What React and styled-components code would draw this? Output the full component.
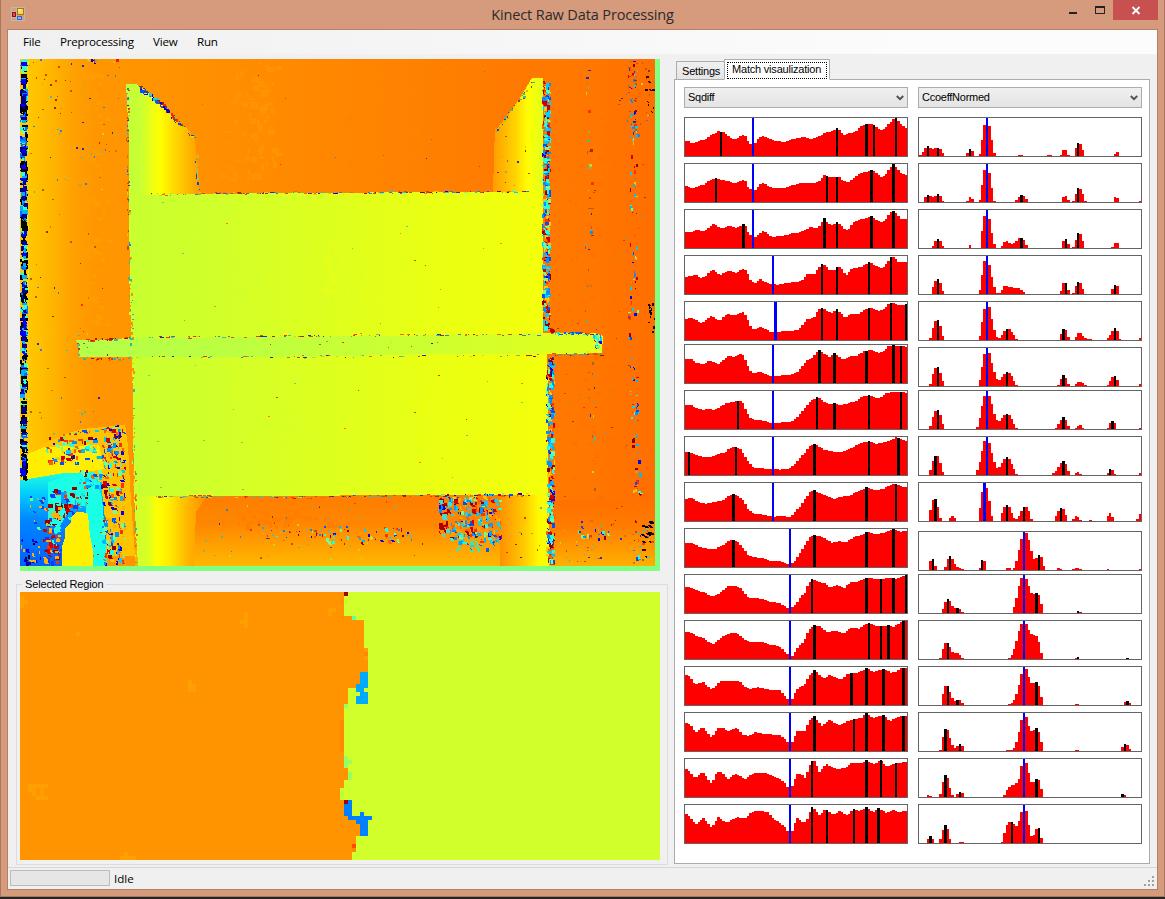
import React from "react";
import styled, { createGlobalStyle } from "styled-components";

const Global = createGlobalStyle`
  * { box-sizing: border-box; }
  html, body { margin: 0; padding: 0; background: #242326; overflow: hidden; }
`;

const UI = `"Open Sans", "Noto Sans", sans-serif`;
const CLASSIC = `"Liberation Sans", Arial, sans-serif`;

const Desktop = styled.div`
  width: 1165px;
  height: 899px;
  background: #242326;
`;
const Window = styled.div`
  width: 1165px;
  height: 897px;
  display: flex;
  flex-direction: column;
  background: #d69a7d;
  border: 1px solid #a8775f;
  border-top: 0;
  padding: 0 6px 6px;
`;
const TitleBar = styled.header`
  height: 29px;
  flex: none;
  display: grid;
  grid-template-columns: 180px 1fr 180px;
  align-items: start;
`;
const AppIcon = styled.svg`
  display: block;
  margin: 7px 0 0 4px;
`;
const Title = styled.h1`
  margin: 0;
  padding-top: 4px;
  text-align: center;
  font: 400 14.5px/21px ${UI};
  letter-spacing: -0.12px;
  color: #2b2b2b;
  white-space: nowrap;
`;
const Controls = styled.div`
  display: flex;
  justify-content: flex-end;
  height: 20px;
`;
const ControlButton = styled.button`
  width: ${(p) => p.$w}px;
  height: 20px;
  padding: 0;
  border: 0;
  background: ${(p) => (p.$danger ? "#c75050" : "transparent")};
  svg { display: block; }
`;
const Client = styled.div`
  flex: 1;
  min-height: 0;
  display: flex;
  flex-direction: column;
  border: 1px solid #b57f68;
  background: #f0f0f0;
`;
const MenuBar = styled.nav`
  height: 24px;
  flex: none;
  display: flex;
  gap: 20px;
  padding-left: 15px;
  background: linear-gradient(90deg, #f0f0f0, #fcfcfc 80%);
  font: 400 11.6px/24px ${UI};
  letter-spacing: -0.2px;
  color: #000;
`;
const MenuItem = styled.span`
  width: ${(p) => p.$w}px;
  white-space: nowrap;
`;
const Body = styled.main`
  flex: 1;
  min-height: 0;
  display: flex;
`;
const LeftPane = styled.section`
  width: 660px;
  flex: none;
  padding: 5px 0 0 8px;
`;
const DepthView = styled.svg`
  display: block;
  margin-left: 4px;
`;
const GroupBox = styled.fieldset`
  margin: 6px 0 0;
  width: 652px;
  height: 288px;
  padding: 0 3px;
  border: 1px solid #dcdcdc;
  min-width: 0;
`;
const Legend = styled.legend`
  margin-left: 2px;
  padding: 0 3px;
  height: 14px;
  font: 400 11px/14px ${CLASSIC};
  letter-spacing: -0.15px;
  color: #000;
`;
const RegionView = styled.svg`
  display: block;
  margin-top: 1px;
`;
const RightPane = styled.section`
  flex: none;
  width: 476px;
  margin-left: 6px;
  padding-top: 5px;
`;
const Tabs = styled.div`
  height: 21px;
  display: flex;
  align-items: flex-end;
  padding-left: 2px;
  position: relative;
  z-index: 1;
`;
const Tab = styled.div`
  width: ${(p) => (p.$active ? 106 : 49)}px;
  height: ${(p) => (p.$active ? 21 : 19)}px;
  margin-left: ${(p) => (p.$active ? -1 : 0)}px;
  padding: ${(p) => (p.$active ? "2px 2px" : "2px 5px")};
  border: 1px solid #acacac;
  border-bottom-color: ${(p) => (p.$active ? "#fff" : "#acacac")};
  background: ${(p) => (p.$active ? "#fff" : "linear-gradient(#f0f0f0, #e5e5e5)")};
  font: 400 11px/15px ${CLASSIC};
  letter-spacing: -0.2px;
  white-space: nowrap;
  color: #000;
`;
const Focus = styled.span`
  display: block;
  height: 17px;
  padding-left: 4px;
  border: 1px dotted #000;
  line-height: 12px;
`;
const TabPage = styled.div`
  height: 785px;
  margin-top: -1px;
  border: 1px solid #acacac;
  background: #fff;
  display: flex;
  gap: 10px;
  padding: 7px 0 0 9px;
`;
const Column = styled.div`
  width: 224px;
`;
const Select = styled.div`
  height: 21px;
  display: flex;
  align-items: center;
  justify-content: space-between;
  padding: 0 3px;
  margin-bottom: 9px;
  border: 1px solid #acacac;
  background: linear-gradient(#f0f0f0, #e4e4e4);
  font: 400 11px/19px ${CLASSIC};
  letter-spacing: -0.25px;
  color: #000;
`;
const ChartFrame = styled.div`
  width: 224px;
  height: 40px;
  border: 1px solid #646464;
  background: #fff;
  margin-bottom: ${(p) => p.$gap}px;
  svg { display: block; }
`;
const StatusBar = styled.footer`
  height: 22px;
  flex: none;
  display: flex;
  border-top: 1px solid #d7d7d7;
  padding: 2px 1px 0 2px;
  font: 400 11.6px/17px ${UI};
  color: #000;
`;
const Progress = styled.div`
  width: 100px;
  height: 16px;
  border: 1px solid #bcbcbc;
  background: #e6e6e6;
  margin-right: 4px;
`;
const Grip = styled.svg`
  margin: 6px 0 0 auto;
`;

/* ---------- depth map ---------- */

function makeRandom(seed) {
  let s = seed;
  return () => {
    s = (s + 0x6d2b79f5) | 0;
    let t = Math.imul(s ^ (s >>> 15), 1 | s);
    t = (t + Math.imul(t ^ (t >>> 7), 61 | t)) ^ t;
    return ((t ^ (t >>> 14)) >>> 0) / 4294967296;
  };
}

const JET = ["#0000ff", "#0050ff", "#0090ff", "#00b8ff", "#20ffe0", "#70ff90", "#ffc800", "#ff3000", "#d00000", "#900000", "#00d0ff", "#ff6000"];
const COLD = ["#000000", "#000000", "#000000", "#000000", "#0000ff", "#0070ff", "#00b0ff", "#30ffd0", "#80ff80", "#00008c", "#000000"];
const WARM = ["#ff3000", "#a03000", "#40c0a0", "#3080d0", "#c8d820", "#2030b0", "#90b060", "#b06010", "#e07000"];
const BLACK = ["#000000", "#000000", "#300000"];

function buildNoise() {
  const rnd = makeRandom(71);
  const layers = {};
  const put = (x, y, w, h, color) => {
    layers[color] = (layers[color] || "") + `M${Math.round(x)} ${Math.round(y)}h${w}v${h}h${-w}z`;
  };
  const fill = (x, y, w, h, n, palette, mw = 3, mh = 3) => {
    for (let i = 0; i < n; i++) {
      const c = palette[Math.floor(rnd() * palette.length)];
      const pw = 1 + Math.floor(rnd() * mw);
      const ph = 1 + Math.floor(rnd() * mh);
      const px = x + rnd() * Math.max(0, w - pw);
      const py = y + rnd() * Math.max(0, h - ph);
      put(px, py, pw, ph, c);
      if (mw > 2) {
        const dx = rnd() > 0.5 && px + pw + 1 < x + w ? 1 : 0;
        put(px + dx, py + ph, pw, 1, c);
      }
    }
  };
  const edge = (x1, y1, x2, y2, n, palette, jitter = 1, mw = 3, mh = 2) => {
    for (let i = 0; i < n; i++) {
      const t = rnd();
      const c = palette[Math.floor(rnd() * palette.length)];
      put(x1 + (x2 - x1) * t + (rnd() - 0.5) * jitter, y1 + (y2 - y1) * t + (rnd() - 0.5) * jitter,
        1 + Math.floor(rnd() * mw), 1 + Math.floor(rnd() * mh), c);
    }
  };

  fill(20, 59, 8, 421, 520, COLD, 6, 4);
  fill(27, 59, 2, 400, 45, ["#ffc800", "#c8ff30"], 1, 4);

  fill(29, 59, 95, 100, 55, WARM, 2, 2);
  fill(29, 150, 80, 290, 60, WARM, 2, 2);
  fill(60, 59, 60, 4, 7, ["#ff1000", "#0000b0", "#c8e020"], 3, 3);
  edge(127, 88, 128, 250, 50, WARM, 2, 2, 3);
  edge(129, 250, 133, 430, 55, ["#d0ff30", "#ff9200", "#40b0a0"], 3, 2, 3);
  edge(133, 430, 136, 565, 45, ["#d0ff30", "#ff9200", "#40b0a0", "#ff6000"], 3, 2, 3);
  edge(138, 86, 162, 105, 38, ["#0000ff", "#0060ff", "#a02000", "#20d0d0", "#0050ff"], 4, 4, 3);
  edge(160, 102, 175, 120, 26, ["#ff2000", "#0000d0", "#0060ff", "#a02000"], 3, 3, 3);
  edge(175, 120, 196, 140, 24, ["#80d040", "#0040ff", "#a04000", "#e0e000"], 3, 3, 2);
  edge(196, 155, 199, 192, 18, ["#20b0d0", "#c0c020", "#0050c0"], 3, 2, 3);

  edge(150, 194, 300, 192, 60, WARM, 2, 4, 1);
  edge(300, 193, 528, 191, 90, [...JET, ...WARM], 2, 4, 1);
  edge(494, 132, 532, 82, 36, ["#a04000", "#30c0a0", "#2040c0", "#e0b000"], 3, 3, 2);
  fill(496, 135, 35, 56, 12, WARM, 2, 2);

  fill(542, 79, 9, 252, 330, JET, 4, 4);
  edge(546, 326, 553, 332, 14, ["#ff3000", "#c00000"], 2, 4, 3);
  fill(546, 355, 9, 210, 230, JET, 4, 4);

  edge(78, 340, 132, 337, 24, ["#a02000", "#ff3000", "#30c0a0"], 2, 4, 2);
  edge(132, 337, 545, 334, 80, WARM, 2, 4, 1);
  edge(552, 333, 595, 333, 30, ["#0060ff", "#20e0e0", "#a02000", "#ff4000"], 2, 4, 2);
  edge(78, 358, 132, 358, 20, ["#a02000", "#ff3000", "#40b0a0"], 2, 3, 2);
  edge(132, 357, 545, 355, 50, WARM, 2, 4, 1);
  edge(553, 354, 600, 354, 24, ["#802000", "#ff4000", "#40a0a0"], 2, 4, 1);
  fill(593, 334, 9, 18, 20, JET, 3, 3);
  edge(77, 340, 79, 358, 8, ["#40c0a0", "#a05000"], 2, 2, 2);
  fill(250, 341, 200, 10, 9, WARM, 2, 1);

  edge(155, 496, 340, 497, 70, WARM, 2, 4, 1);
  edge(340, 496, 438, 495, 34, WARM, 2, 4, 1);
  edge(438, 495, 532, 494, 44, JET, 3, 4, 2);
  fill(438, 496, 14, 40, 32, ["#c00000", "#0000ff", "#0090ff", "#ff2000", "#40e0d0", "#a80000"], 5, 4);
  fill(448, 496, 54, 48, 215, [...JET, "#00a0ff", "#20d0e0", "#ffa000", "#ffa800"], 4, 4);
  fill(454, 536, 42, 15, 40, ["#20d0e0", "#0060ff", "#ffa000", "#50e0a0"], 4, 3);

  fill(190, 500, 245, 62, 60, WARM, 2, 2);
  fill(240, 526, 180, 14, 40, JET, 2, 2);
  fill(315, 528, 100, 16, 30, JET, 3, 3);
  fill(505, 500, 42, 64, 10, WARM, 2, 2);

  edge(630, 60, 634, 140, 55, [...JET, ...WARM], 7, 3, 3);
  edge(632, 140, 634, 310, 42, JET, 7, 2, 4);
  edge(631, 310, 639, 565, 66, JET, 7, 3, 4);
  edge(587, 70, 590, 240, 24, WARM, 4, 3, 3);
  edge(586, 240, 594, 490, 26, WARM, 7, 2, 3);
  fill(618, 59, 36, 70, 34, WARM, 2, 2);
  fill(645, 75, 10, 50, 10, BLACK, 3, 1);
  fill(648, 300, 7, 35, 14, BLACK, 2, 3);
  fill(640, 520, 15, 45, 26, [...BLACK, "#60d080", "#ff4000"], 4, 1);
  fill(556, 520, 96, 45, 55, WARM, 2, 2);
  fill(575, 525, 35, 18, 16, JET, 3, 3);
  fill(556, 80, 96, 430, 40, ["#a04000", "#ff3000", "#50a0a0"], 2, 1);
  fill(135, 198, 400, 294, 40, ["#a0c020", "#ff8000", "#60d080", "#a06010"], 2, 1);
  fill(200, 65, 290, 120, 13, WARM, 1, 1);

  fill(46, 436, 56, 28, 72, JET, 5, 3);
  edge(62, 434, 125, 425, 36, JET, 3, 4, 2);
  fill(102, 428, 24, 138, 225, [...JET, "#ffb000", "#ffb000", "#0000ff"], 4, 4);
  fill(48, 487, 30, 34, 52, ["#d00000", "#ff3000", "#0040ff", "#900000", "#20ffe0", "#00a0ff"], 5, 4);
  fill(43, 505, 19, 60, 78, ["#d00000", "#ff3000", "#0040ff", "#900000", "#20ffe0", "#ffb000"], 5, 4);
  fill(78, 470, 28, 18, 32, JET, 4, 3);
  fill(72, 492, 17, 18, 16, ["#900000", "#ff3000", "#20e0d0", "#00a0ff"], 3, 3);
  fill(92, 515, 14, 50, 8, WARM, 2, 3);
  fill(20, 538, 22, 28, 26, ["#000000", "#0000a0", "#0000ff", "#ffb000"], 3, 3);
  fill(28, 495, 18, 35, 14, ["#ffb000", "#60ff90", "#0040ff"], 3, 2);
  fill(20, 450, 8, 28, 8, BLACK, 6, 3);

  return Object.entries(layers);
}

function buildTexture() {
  const rnd = makeRandom(9);
  const patches = (cx, cy, w, h, n) => {
    let d = "";
    for (let i = 0; i < n; i++) {
      const x = Math.round(cx + (rnd() + rnd() - 1) * w);
      const y = Math.round(cy + (rnd() - 0.5) * h);
      const pw = 2 + Math.floor(rnd() * 6);
      d += `M${x} ${y}h${pw}v${2 + Math.floor(rnd() * 5)}h${-pw}z`;
    }
    return d;
  };
  return [
    ["#ff9300", patches(250, 120, 35, 120, 80)],
    ["#ff8300", patches(385, 125, 45, 120, 80)],
    ["#ff9c00", patches(92, 200, 18, 260, 70)],
    ["#d0ff2c", patches(225, 250, 40, 100, 60)],
    ["#e4ff18", patches(350, 285, 45, 90, 60)],
    ["#d8ff24", patches(265, 410, 50, 150, 60)],
    ["#eeff0e", patches(440, 420, 45, 130, 60)],
    ["#ff7200", patches(600, 310, 35, 400, 90)],
    ["#ff7e00", patches(285, 515, 70, 22, 40)],
  ];
}

const NOISE = buildNoise();
const TEXTURE = buildTexture();

const Stops = ({ list }) => list.map(([o, c]) => <stop key={o} offset={o} stopColor={c} />);
const Ramp = ({ id, x1, x2, stops }) => (
  <linearGradient id={id} gradientUnits="userSpaceOnUse" x1={x1} x2={x2} y1="0" y2="0">
    <Stops list={stops} />
  </linearGradient>
);

function DepthMap() {
  return (
    <DepthView width="640" height="512" viewBox="20 59 640 512" shapeRendering="crispEdges">
      <defs>
        <Ramp id="wall" x1="28" x2="655" stops={[[0, "#ffc800"], [0.04, "#ffb400"], [0.075, "#ff9f00"], [0.11, "#ff9600"], [0.27, "#ff9100"], [0.4, "#ff8a00"], [0.6, "#ff8200"], [0.8, "#ff7900"], [0.9, "#ff7700"], [1, "#ff6e00"]]} />
        <Ramp id="board" x1="128" x2="548" stops={[[0, "#c8ff30"], [0.4, "#daff22"], [0.7, "#e8ff14"], [1, "#f4ff0a"]]} />
        <Ramp id="leftFlap" x1="128" x2="200" stops={[[0, "#c0ff38"], [0.2, "#ccff30"], [0.35, "#f0ff10"], [0.45, "#ffff00"], [0.65, "#ffd800"], [1, "#ff9a00"]]} />
        <Ramp id="lowFlap" x1="134" x2="205" stops={[[0, "#ccff30"], [0.2, "#daff22"], [0.32, "#ffff00"], [0.5, "#ffec00"], [0.7, "#ffc000"], [1, "#ff9000"]]} />
        <Ramp id="rightFlap" x1="493" x2="543" stops={[[0, "#ff9c00"], [0.45, "#ffd400"], [0.7, "#ffff00"], [1, "#e0ff1c"]]} />
        <Ramp id="lowRight" x1="500" x2="548" stops={[[0, "#ff9000"], [0.5, "#ffca00"], [0.8, "#fff800"], [1, "#f4ff0a"]]} />
        <Ramp id="rod" x1="77" x2="603" stops={[[0, "#b4ff48"], [0.3, "#bcff40"], [0.65, "#ccff30"], [1, "#e4ff1a"]]} />
        <linearGradient id="floor" x1="0" x2="0" y1="0" y2="1">
          <Stops list={[[0, "#ff7e00"], [0.4, "#ff8600"], [0.7, "#ffa000"], [1, "#ffb800"]]} />
        </linearGradient>
        <linearGradient id="floorRight" x1="0" x2="0" y1="0" y2="1">
          <Stops list={[[0, "#ff7000"], [0.4, "#ff7c00"], [1, "#ffb000"]]} />
        </linearGradient>
        <linearGradient id="water" x1="0" x2="0" y1="0" y2="1">
          <Stops list={[[0, "#20ffe0"], [0.25, "#00c8ff"], [0.5, "#0088ff"], [1, "#0060ff"]]} />
        </linearGradient>
      </defs>
      <rect x="20" y="59" width="640" height="512" fill="#80ff80" />
      <rect x="20" y="59" width="635" height="507" fill="url(#wall)" />
      {TEXTURE.slice(0, 3).map(([c, d]) => <path key={c} d={d} fill={c} />)}
      <path d="M126 84h10l9 6 17 14 14 17 12 8 7 11 2 18 2 38H129V140z" fill="url(#leftFlap)" />
      <path d="M532 78l11 0V194H493l1-40 1-23 12-15 13-18z" fill="url(#rightFlap)" />
      <rect x="135" y="496" width="414" height="70" fill="url(#floor)" />
      <rect x="549" y="500" width="106" height="66" fill="url(#floorRight)" />
      <path d="M134 494h74l-12 18-2 54H138z" fill="url(#lowFlap)" />
      <path d="M500 494h49v72H500z" fill="url(#lowRight)" />
      <path d="M129 195l80-1 70-1 60 0 60-1h130l14-2V334h3l2 60V495H400l-120 1H134l-1-90-1-50-2-60z" fill="url(#board)" />
      {TEXTURE.slice(3).map(([c, d]) => <path key={c} d={d} fill={c} />)}
      <path d="M76 340h20l34-2 160-1 180-2 80-2h45l8 3-1 17-30 1H440l-150 3H79l0-9z" fill="url(#rod)" />
      <path d="M28 453l16-9 18-9 20-6 43-4 3 20 2 40 5 71H100L88 470 20 482v-8z" fill="#ffc400" />
      <path d="M28 454l16-7 55-2 5 24-35 6-47 8v-16z" fill="#ffee00" />
      <path d="M20 480l14-2 30-5 30-1 8 16 3 32 2 46H20z" fill="url(#water)" />
      <path d="M48 482l20-6 26-3 8 25 3 35 2 33H90l-4-60-14 0-12 20H48z" fill="#18ffe6" />
      {NOISE.map(([c, d]) => <path key={c} d={d} fill={c} />)}
      <path d="M62 566v-20l3-8v-10l6-6v-4l5-6h6l6 2 2 22 3 14v16z" fill="#fff000" />
      <path d="M655 59h5v512H20v-5h635z" fill="#80ff80" />
    </DepthView>
  );
}

/* ---------- magnified region: cells of four pixels ---------- */

const EDGE_ROWS = [[0, 81], [6, 83], [7, 86], [14, 87], [20, 85], [23, 84], [24, 82], [28, 81], [44, 82], [47, 81], [49, 80], [52, 81], [56, 82], [57, 84], [58, 85], [61, 84], [65, 83], [67, 83]];
const CELLS = [
  ["#a80000", [[81, 0, 1, 1], [81, 52, 1, 1]]],
  ["#60ff98", [[83, 6, 1, 1]]],
  ["#00a8ff", [[85, 20, 2, 3], [84, 23, 3, 1], [84, 24, 2, 1], [85, 25, 2, 1], [84, 26, 3, 2]]],
  ["#98ff60", [[81, 28, 1, 1], [81, 41, 1, 3], [82, 42, 1, 1], [82, 45, 1, 2]]],
  ["#c0ff38", [[80, 49, 1, 3]]],
  ["#0080ff", [[82, 52, 1, 1], [81, 53, 2, 3], [85, 55, 1, 1], [82, 56, 6, 1], [84, 57, 3, 1], [85, 58, 2, 3]]],
  ["#ff4800", [[83, 63, 1, 1]]],
  ["#ff8800", [[80, 32, 1, 8], [86, 15, 1, 1], [83, 64, 1, 1]]],
  ["#ff9f00", [[0, 1, 1, 3], [1, 2, 1, 1], [56, 5, 1, 4], [55, 7, 1, 1], [77, 4, 2, 1], [77, 5, 1, 1], [14, 10, 1, 1], [42, 22, 1, 3], [43, 23, 1, 2], [2, 48, 5, 1], [2, 49, 2, 1], [5, 49, 1, 2], [3, 50, 1, 1], [4, 51, 3, 1], [25, 66, 4, 1], [26, 65, 1, 1], [86, 14, 1, 1], [86, 16, 1, 1]]],
];

function RegionMap() {
  return (
    <RegionView width="640" height="268" viewBox="0 0 160 67" shapeRendering="crispEdges">
      <rect width="160" height="67" fill="#d0ff2c" />
      {EDGE_ROWS.slice(0, -1).map(([y, x], i) => (
        <rect key={y} x="0" y={y} width={x} height={EDGE_ROWS[i + 1][0] - y} fill="#ff9400" />
      ))}
      {CELLS.map(([c, list]) =>
        list.map(([x, y, w, h]) => <rect key={`${c}${x}-${y}`} x={x} y={y} width={w} height={h} fill={c} />)
      )}
    </RegionView>
  );
}

/* ---------- match charts ---------- */

// Score curves: baseline, "x,y" samples, black peaks "x,width", best match "x,width"; three units per pixel.
const CURVES = [
  [138, "15,93 28,93 32,99 42,98 60,91 75,88 90,77 105,70 115,63 130,66 145,77 158,87 168,87 180,79 190,75 198,79 207,102 228,99 234,86 248,78 262,82 280,92 300,94 315,96 330,89 345,86 370,81 395,87 410,82 425,74 440,67 455,65 470,54 480,61 490,75 505,70 525,66 540,52 555,42 583,44 600,60 610,60 625,44 640,27 648,24 655,33 665,45 681,57", "120,6 468,6 555,9 579,6 645,6", "216,6"],
  [276, "15,228 28,231 40,234 60,226 75,223 90,210 105,204 120,208 145,213 165,221 180,214 190,210 198,215 207,237 228,240 238,224 248,219 265,228 280,234 318,234 340,225 365,219 408,218 420,212 432,195 445,200 460,203 475,199 490,212 505,216 520,205 535,192 555,186 580,180 590,190 605,200 617,195 628,177 640,162 650,175 662,189 681,195", "105,6 438,6 468,6 570,9 636,9", "216,6"],
  [414, "15,366 35,365 50,359 65,363 80,361 95,345 103,342 115,352 130,354 150,347 165,354 180,350 190,342 198,348 207,375 228,381 238,370 250,362 262,370 278,381 318,376 340,369 355,369 375,360 392,350 408,355 420,346 433,324 442,338 458,346 472,336 484,345 496,361 507,357 520,338 535,330 555,325 577,318 590,332 610,336 620,325 632,306 642,303 652,315 662,327 681,327", "186,9 429,9 468,6 570,9 636,9", "216,6"],
  [552, "15,501 28,499 45,494 65,504 80,497 92,482 102,480 110,490 122,495 135,488 150,483 170,489 180,479 192,477 200,482 210,510 225,519 240,507 255,515 270,521 290,524 325,519 355,515 370,508 380,493 405,491 415,474 425,462 437,468 450,481 462,482 474,468 485,476 500,497 515,476 545,471 567,456 588,467 609,475 620,460 633,441 645,443 655,457 665,457 681,455", "423,6 468,6 564,6 630,6", "276,6"],
  [690, "15,627 35,624 50,631 65,639 80,630 92,616 103,623 120,634 132,620 145,612 165,616 180,609 190,606 200,618 210,646 220,658 240,651 255,655 270,665 285,667 320,663 350,661 365,649 380,628 402,624 415,600 425,594 440,601 455,611 472,597 483,610 496,624 512,612 540,611 555,598 570,594 600,604 615,594 627,579 636,577 655,585 681,583", "423,6 468,6 564,6 630,6 675,6", "282,9"],
  [129, "15,57 35,57 50,69 72,73 90,60 115,73 130,59 145,48 163,51 180,42 190,45 202,75 210,91 220,99 240,96 262,105 280,109 330,104 350,98 365,81 380,63 395,54 405,42 418,30 430,39 450,51 463,39 475,49 490,60 505,51 530,47 550,34 575,30 600,39 612,33 625,19 640,16 670,18 681,21", "414,9 459,9 555,9 636,9 660,6", "276,6"],
  [267, "15,195 35,195 50,205 70,210 85,206 105,210 122,200 138,189 160,185 180,183 190,191 202,220 215,238 255,243 275,250 330,245 350,236 365,215 380,198 395,182 410,171 420,175 435,187 450,192 463,189 480,195 500,191 515,185 530,184 545,170 567,165 590,174 603,173 615,161 635,155 670,155 681,160", "171,6 408,6 459,9 564,6 660,6", "276,6"],
  [405, "15,336 33,337 50,346 70,351 92,351 115,342 135,338 150,324 170,321 182,328 192,345 205,366 220,382 270,387 300,389 330,385 345,373 360,355 375,338 390,319 402,312 415,318 430,328 460,335 485,336 500,330 520,323 535,311 550,308 567,303 585,312 610,308 630,302 650,291 665,297 681,303", "24,6 165,6 399,9 564,6 651,9", "276,6"],
  [543, "15,477 35,474 55,486 80,491 105,486 130,480 145,468 160,462 172,466 190,480 205,508 220,520 250,524 280,530 315,528 330,532 345,517 360,500 375,477 390,457 402,450 420,461 445,468 463,477 485,470 510,468 525,458 550,449 560,441 585,450 610,447 625,437 650,431 665,440 681,442", "156,9 399,9 555,9 645,6", "276,6"],
  [681, "15,609 35,609 55,619 80,626 105,627 125,618 140,607 155,600 172,604 190,624 205,645 220,651 250,655 270,663 305,664 330,674 345,664 360,638 375,615 390,592 405,585 435,595 455,609 475,604 500,606 520,592 550,583 562,576 585,582 610,579 630,572 642,567 660,575 681,573", "156,9 399,9 555,9 636,9", "327,6"],
  [819, "15,741 35,743 60,754 75,758 92,768 110,766 125,753 145,739 165,738 185,747 205,773 245,776 270,786 300,789 325,806 343,797 360,775 375,758 387,728 397,717 415,726 435,730 450,742 472,736 492,745 510,728 535,725 558,714 600,717 635,714 650,717 665,709 675,705 681,705", "393,6 555,9 600,6 636,9 675,6", "327,6"],
  [177, "15,96 33,98 50,108 70,114 90,129 102,132 120,115 140,103 160,99 175,101 200,124 245,126 270,134 295,138 310,150 325,165 338,168 350,145 370,127 388,88 403,75 420,79 440,96 470,93 490,102 510,84 540,86 558,71 567,69 585,78 618,78 628,75 640,81 655,72 670,63 681,65", "399,9 564,6 600,6 621,9 666,9", "327,6"],
  [315, "15,225 30,228 45,254 70,246 95,270 110,255 122,243 180,243 190,258 208,267 235,261 260,268 300,271 322,297 338,297 350,268 375,252 390,225 403,210 420,225 432,235 450,225 485,238 502,222 520,218 540,217 560,204 580,216 610,207 635,219 650,214 665,204 681,204", "399,9 510,9 555,9 606,9 666,9", "327,6"],
  [453, "15,366 30,372 48,398 68,380 95,412 115,384 128,384 145,394 172,384 190,405 205,408 228,396 250,402 300,405 315,416 325,429 338,426 350,393 375,392 390,360 403,348 425,379 450,360 478,376 500,364 525,357 545,353 560,339 580,354 610,345 630,363 660,349 681,348", "399,9 519,6 555,9 606,9 666,9", "327,6"],
  [591, "15,504 30,514 45,537 68,514 95,552 110,518 122,515 145,536 168,521 198,538 212,525 232,518 265,521 300,537 315,550 325,564 338,558 350,521 365,523 375,533 388,501 397,480 405,484 418,516 438,492 470,507 500,502 515,490 545,490 560,480 580,494 603,480 620,500 650,489 681,486", "393,6 555,9 600,6 645,6", "327,6"],
  [729, "15,639 30,650 48,674 70,653 95,684 115,651 140,668 170,652 198,654 213,637 230,633 262,635 280,655 300,670 315,681 325,696 338,693 350,651 370,669 380,662 397,618 418,646 438,627 460,646 478,633 502,646 520,627 540,633 560,621 580,636 597,624 620,640 638,629 658,636 681,633", "393,6 438,6 519,6 555,9 591,9", "327,6"],
];

// Peak histograms: "x:height" steps, "b" marks a detected peak.
const PEAKS = [
  ["15:3 24:12 30:24 39:30b 45:24 54:21 60:24 69:24b 75:21 84:9 90:0 156:9 165:21b 171:15 180:0 195:6 201:48 207:93 222:90 231:48 237:9 246:0 312:3 327:0 399:3 414:0 438:3 444:18 459:3 468:0 483:24 489:39b 495:36 504:18 510:0 600:6 606:12 615:0", "216,6"],
  ["30:15 39:21b 45:18 54:15 60:18 69:24b 75:18 84:3 90:0 156:3 165:15 171:9 180:0 195:6 201:51 207:96 222:87 231:42 237:3 246:0 303:6 312:15 318:21b 327:18 333:9 342:0 444:15 453:18 459:6 468:0 474:3 483:24 489:42b 495:39 504:24 510:3 519:0 600:15 606:12 615:0 675:3", "216,6"],
  ["54:6 60:21 69:27b 75:21 84:6 90:0 165:9 171:0 201:51 207:96 222:87 231:45 237:12 246:0 261:6 267:18 276:21 282:15 291:12 297:15 303:21 312:30 318:30b 327:24 333:9 342:0 444:21 453:27b 459:12 468:0 474:3 483:24 489:45b 495:42 504:21 510:0 591:3 600:15 615:0", "216,6"],
  ["54:21 60:39 69:45b 75:33 84:9 90:0 195:12 201:57 207:99 222:87 231:51 237:21 246:3 261:12 267:24 282:21 297:18 318:12 327:6 333:0 438:9 444:33 453:33b 459:12 468:0 474:3 483:24 489:36b 495:33 504:15 510:0 591:15 600:27b 606:24 615:0", "216,6"],
  ["45:6 54:36 60:57 69:60b 75:42 84:12 90:0 195:12 201:54 207:93 222:99 231:63 237:30 246:9 252:6 261:15 267:27 276:33b 282:33 291:24 297:15 303:3 312:0 438:18 444:33b 453:30 459:9 468:0 483:9 489:21 504:12 510:6 519:3 534:0 579:6 585:15 591:27 600:36b 606:27 615:3 621:0 675:6", "216,6"],
  ["45:6 54:36 60:54 69:57b 75:39 84:15 90:0 195:18 201:57 207:96 222:99 231:69 237:42 246:21 252:18 261:27 267:36 276:42b 282:39 291:30 297:15 303:3 312:0 429:3 438:21 444:33b 453:24 459:6 468:0 483:6 489:12 504:9 510:3 519:0 579:3 585:15 591:27 600:30b 606:18 615:0 675:6", "216,6"],
  ["45:9 54:36 60:54 69:57b 75:42 84:15 90:0 186:6 195:33 201:69 207:99 231:75 237:45 246:27 252:24 261:33 267:42 276:45b 282:42 291:30 297:15 303:3 312:0 423:3 429:15 438:27 444:36b 453:27 459:9 468:0 483:3 489:9 495:12 504:3 510:0 579:3 585:18 591:24b 600:18 606:0 675:3", "216,6"],
  ["45:15 54:42 60:57b 69:57 75:36 84:9 90:0 186:15 195:39 201:72 207:102 222:96 231:66 237:39 246:21 252:24 261:36 267:48 276:54b 282:48 291:33 297:18 303:3 312:0 414:6 423:12 429:24 438:36 444:42b 453:33 459:12 468:0 483:6 489:9 495:3 504:0 579:6 585:18b 591:15 600:3 606:0 675:6", "216,6"],
  ["45:33 54:63 60:66b 69:42 75:9 84:0 105:9 111:15 120:9 126:0 195:39 201:87 216:99 222:60 231:15 237:0 261:24 267:42 276:48b 282:42 291:24 297:9 303:6 312:15 318:30 327:42b 333:42 342:30 348:6 357:0 423:15 429:30 438:39b 444:36 453:18 459:0 474:6 483:15 489:12 495:3 504:0 525:3 534:0 579:15 585:24 591:12 600:0 666:6 675:21", "207,9"],
  ["45:27 54:33b 60:12 69:0 90:9 99:33 105:42b 111:33 120:18 126:9 135:6 141:3 150:0 195:6 201:30b 207:27 216:0 276:6 291:0 297:6 303:27 312:60 318:93 333:111 342:90 348:57 357:33 363:36 372:45b 378:39 387:12 393:0 429:6 438:3 444:0 474:3 483:6 495:3 504:0 579:3 585:0 675:3", "327,6"],
  ["84:12 90:33 99:42b 105:36 111:21 120:15 126:15b 135:12 141:3 150:0 297:18 303:45 312:81 318:105 333:102 342:81 348:60 357:57 363:60b 372:54 378:27 387:0 489:6b 495:3 504:0", "327,6"],
  ["75:3 84:30 90:48 99:48b 105:36 111:21 120:18 135:12 141:3 150:0 282:3 291:12 297:30 303:54 312:84 318:105 342:87 348:75 357:72 363:69 372:51 378:18 387:0 483:3 489:6b 495:0 636:3b 645:0", "327,6"],
  ["84:33 90:57 99:57b 105:39 111:21 120:12 126:15b 135:15 141:6 150:0 282:3 291:6 297:15 303:33 312:60 318:93 333:108 342:84 348:66 363:69b 372:57 378:24 387:0 483:3 495:0 630:9 636:12b 645:6 651:0", "327,6"],
  ["75:3 84:42 90:66b 99:63 105:39 111:18 120:9 126:15 135:21b 141:15 150:0 276:3 297:9 303:27 312:57 318:93 333:102 342:75 348:60 357:63 363:69b 372:57 378:27 387:0 483:3 495:0 621:12 630:21b 636:18 645:6 651:0", "327,6"],
  ["39:6 45:3 54:0 75:9 84:45 90:66b 99:57 105:27 111:6 120:0 126:9 135:15b 141:12 150:0 267:6 276:21 282:30 291:36 303:42 312:54 318:93 333:102 342:72 348:45 363:54b 372:51 378:24 387:0 621:9b 630:6 636:0", "327,6"],
  ["39:12 45:21b 54:12 60:0 75:12 84:39 90:54b 99:42 105:12 111:0 135:3 150:0 261:3 267:30 276:54 282:63 291:63b 297:57 303:51 312:66 318:93 333:96 342:54 348:21 357:24 363:42 372:45b 378:15 387:0", "327,6"],
];

const BAR = 222 / 90;
const pairs = (s) => s.split(" ").map((p) => p.split(",").map(Number));

function sample(points, x) {
  let i = 0;
  while (i < points.length - 2 && points[i + 1][0] < x) i++;
  const [x1, y1] = points[i];
  const [x2, y2] = points[i + 1];
  const t = Math.min(1, Math.max(0, (x - x1) / (x2 - x1)));
  return y1 + (y2 - y1) * t;
}

const column = (x, w, h) => `M${x} ${38 - h}h${w}V38h${-w}z`;

function Plot({ red, black, best }) {
  const [[bx, bw]] = pairs(best);
  return (
    <svg width="222" height="38" viewBox="0 0 222 38" shapeRendering="crispEdges">
      <path d={red} fill="#ff0000" />
      <path d={black} fill="#000" />
      <rect x={(bx - 15) / 3} y="0" width={bw / 3} height="38" fill="#0000ff" />
    </svg>
  );
}

function CurveChart({ data, gap }) {
  const [base, curve, peaks, best] = data;
  const points = pairs(curve);
  const heightAt = (px) => Math.round((base - sample(points, 15 + px * 3)) / 3);
  let red = "";
  for (let i = 0; i < 90; i++) {
    const x = Math.round(i * BAR + 0.2);
    const end = Math.min(222, Math.round((i + 1) * BAR + 0.2));
    red += column(x, end - x, heightAt((x + end) / 2));
  }
  const black = pairs(peaks)
    .map(([x, w]) => column((x - 15) / 3, w / 3, heightAt((x - 15 + w / 2) / 3)))
    .join("");
  return <ChartFrame $gap={gap}><Plot red={red} black={black} best={best} /></ChartFrame>;
}

function PeakChart({ data, gap }) {
  const [steps, best] = data;
  const list = steps.split(" ").map((s) => {
    const [x, h] = s.split(":");
    return { x: (Number(x) - 15) / 3, h: parseInt(h, 10) / 3, peak: h.endsWith("b") };
  });
  let red = "";
  let black = "";
  list.forEach((s, i) => {
    const end = i + 1 < list.length ? list[i + 1].x : 222;
    if (!s.h) return;
    const d = column(s.x, end - s.x, s.h);
    if (s.peak) black += d;
    else red += d;
  });
  return <ChartFrame $gap={gap}><Plot red={red} black={black} best={best} /></ChartFrame>;
}

const LEFT_GAPS = { 4: 3 };
const RIGHT_GAPS = { 5: 3, 8: 9, 9: 3 };

const Chevron = () => (
  <svg width="8" height="6" viewBox="0 0 8 6">
    <path d="M0.8 1L4 4.2 7.2 1" fill="none" stroke="#505050" strokeWidth="1.9" />
  </svg>
);

export default function App() {
  return (
    <Desktop>
      <Global />
      <Window>
        <TitleBar>
          <AppIcon width="14" height="14" viewBox="0 0 14 14" shapeRendering="crispEdges">
            <path d="M.5.5h13v13H.5zM5.500.5v13M.5 4.500h5M.5 10.500h5" fill="none" stroke="#bdb8b2" />
            <rect x="6" y="1" width="7" height="7" fill="#a87800" />
            <rect x="7" y="2" width="5" height="5" fill="#ffd34a" />
            <rect x="7" y="2" width="3" height="2" fill="#ffeb9a" />
            <rect x="1" y="5" width="4" height="5" fill="#8e1010" />
            <rect x="2" y="6" width="2" height="3" fill="#e05048" />
            <rect x="6" y="9" width="5" height="4" fill="#3a68c8" />
            <rect x="7" y="10" width="3" height="2" fill="#80b0ff" />
          </AppIcon>
          <Title>Kinect Raw Data Processing</Title>
          <Controls>
            <ControlButton $w={27} aria-label="Minimize">
              <svg width="27" height="20" shapeRendering="crispEdges"><rect x="10" y="12" width="8" height="2" fill="#222" /></svg>
            </ControlButton>
            <ControlButton $w={27} aria-label="Maximize">
              <svg width="27" height="20" shapeRendering="crispEdges"><path d="M9 6h10v8H9zM10 8v5h8V8z" fillRule="evenodd" fill="#222" /></svg>
            </ControlButton>
            <ControlButton $w={45} $danger aria-label="Close">
              <svg width="45" height="20"><path d="M19.500 7l7 7M26.500 7l-7 7" stroke="#fff" strokeWidth="1.8" /></svg>
            </ControlButton>
          </Controls>
        </TitleBar>
        <Client>
          <MenuBar>
            <MenuItem $w={17}>File</MenuItem>
            <MenuItem $w={73}>Preprocessing</MenuItem>
            <MenuItem $w={24}>View</MenuItem>
            <MenuItem $w={24}>Run</MenuItem>
          </MenuBar>
          <Body>
            <LeftPane>
              <DepthMap />
              <GroupBox>
                <Legend>Selected Region</Legend>
                <RegionMap />
              </GroupBox>
            </LeftPane>
            <RightPane>
              <Tabs>
                <Tab>Settings</Tab>
                <Tab $active><Focus>Match visaulization</Focus></Tab>
              </Tabs>
              <TabPage>
                <Column>
                  <Select>Sqdiff<Chevron /></Select>
                  {CURVES.map((c, i) => <CurveChart key={i} data={c} gap={LEFT_GAPS[i] ?? 6} />)}
                </Column>
                <Column>
                  <Select>CcoeffNormed<Chevron /></Select>
                  {PEAKS.map((c, i) => <PeakChart key={i} data={c} gap={RIGHT_GAPS[i] ?? 6} />)}
                </Column>
              </TabPage>
            </RightPane>
          </Body>
          <StatusBar>
            <Progress />
            <span>Idle</span>
            <Grip width="12" height="12" shapeRendering="crispEdges">
              <path d="M8 0h2v2H8zM4 4h2v2H4zM8 4h2v2H8zM0 8h2v2H0zM4 8h2v2H4zM8 8h2v2H8z" fill="#a0a0a0" />
            </Grip>
          </StatusBar>
        </Client>
      </Window>
    </Desktop>
  );
}
